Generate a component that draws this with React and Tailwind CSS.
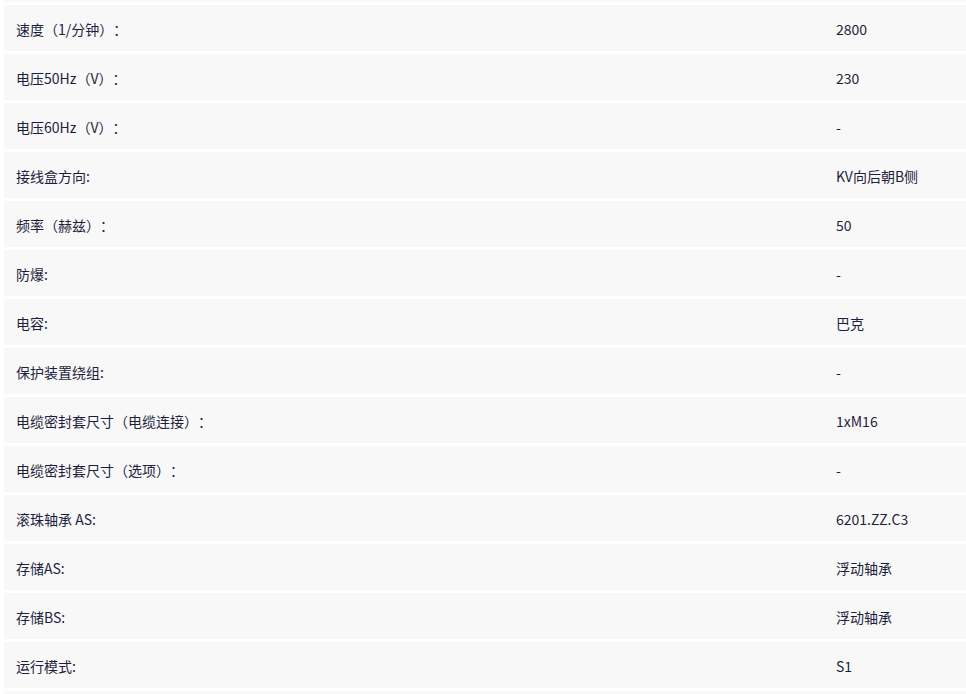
const rows = [
  ['速度（1/分钟）：', '2800'],
  ['电压50Hz（V）：', '230'],
  ['电压60Hz（V）：', '-'],
  ['接线盒方向:', 'KV向后朝B侧'],
  ['频率（赫兹）：', '50'],
  ['防爆:', '-'],
  ['电容:', '巴克'],
  ['保护装置绕组:', '-'],
  ['电缆密封套尺寸（电缆连接）：', '1xM16'],
  ['电缆密封套尺寸（选项）：', '-'],
  ['滚珠轴承 AS:', '6201.ZZ.C3'],
  ['存储AS:', '浮动轴承'],
  ['存储BS:', '浮动轴承'],
  ['运行模式:', 'S1'],
];

export default function App() {
  return (
    <div className="h-[694px] overflow-hidden bg-white pl-1 flex flex-col gap-[3px] text-[14px] text-[#1e1e3c] [text-spacing-trim:space-all]" style={{ fontFamily: '"Microsoft YaHei", "Noto Sans CJK SC", sans-serif' }}>
      <div className="h-[2px] bg-[#f8f8f8] shrink-0" />
      {rows.map(([label, value]) => (
        <div key={label} className="h-[46px] shrink-0 bg-[#f8f8f8] grid grid-cols-[820px_1fr] items-center pl-3 pt-[2px]">
          <div>{label}</div>
          <div>{value}</div>
        </div>
      ))}
      <div className="h-[10px] bg-[#f8f8f8] shrink-0" />
    </div>
  );
}
